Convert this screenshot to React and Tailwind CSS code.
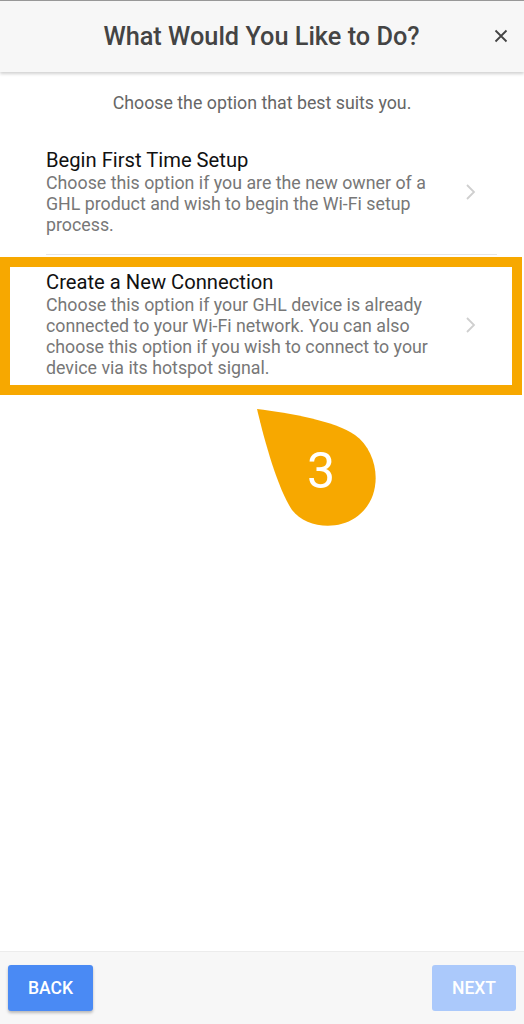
import React from "react";

function Chevron() {
  return (
    <svg width="12" height="18" viewBox="0 0 12 18" className="shrink-0">
      <path d="M2 2 L9 9 L2 16" fill="none" stroke="#cfcfcf" strokeWidth="1.8" />
    </svg>
  );
}

export default function App() {
  return (
    <div className="h-[1024px] w-[524px] flex flex-col bg-white overflow-hidden" style={{ fontFamily: "Roboto, 'Noto Sans', sans-serif" }}>
      <div className="border-t border-[#9a9a9a]" />
      <header className="relative h-[71px] bg-[#f7f7f7] flex items-center justify-center shadow-[0_2px_3px_rgba(0,0,0,0.18)] z-10">
        <h1 className="text-[25.3px] font-medium text-[#444] pr-[1px]">What Would You Like to Do?</h1>
        <button className="absolute right-[16px] top-[28px]">
          <svg width="14" height="14" viewBox="0 0 14 14">
            <path d="M1.5 1.5 L12.5 12.5 M12.5 1.5 L1.5 12.5" stroke="#444" strokeWidth="1.8" />
          </svg>
        </button>
      </header>
      <main className="flex-1 flex flex-col">
        <p className="pt-[21px] text-center text-[17.8px] leading-[20px] text-[#666]">Choose the option that best suits you.</p>
        <div className="mt-[36px] ml-[46px] mr-[27px] flex items-center border-b border-[#e6e6e6] pb-[19px]">
          <div className="flex-1">
            <div className="text-[20.2px] leading-[23px] text-[#111]">Begin First Time Setup</div>
            <div className="text-[17.8px] leading-[21px] text-[#777] pr-[20px]">Choose this option if you are the new owner of a GHL product and wish to begin the Wi-Fi setup process.</div>
          </div>
          <div className="pr-[20px]"><Chevron /></div>
        </div>
        <div className="mt-[2px] mr-[2px] border-[10px] border-[#F7A800] flex items-center pl-[36px] pt-[4px] pb-[7px]">
          <div className="flex-1">
            <div className="text-[20.2px] leading-[23px] text-[#111]">Create a New Connection</div>
            <div className="text-[17.8px] leading-[21px] text-[#777]">Choose this option if your GHL device is already connected to your Wi-Fi network. You can also choose this option if you wish to connect to your device via its hotspot signal.</div>
          </div>
          <div className="pr-[35px] pl-[10px]"><Chevron /></div>
        </div>
        <div className="relative ml-[250px] mt-[8px] w-[132px] h-[126px]">
          <svg width="132" height="126" viewBox="0 0 132 126" className="absolute inset-0">
            <path d="M7 6 C40 10 85 18 105 32 C130 50 135 95 105 115 C85 128 55 124 42 107 C28 86 15 40 7 6 Z" fill="#F7A800" />
          </svg>
          <span className="absolute left-[71px] top-[68px] -translate-x-1/2 -translate-y-1/2 text-white text-[50px] leading-none font-normal">3</span>
        </div>
      </main>
      <footer className="h-[73px] bg-[#f7f7f7] border-t border-[#ececec] flex items-center justify-between px-[8px]">
        <button className="w-[85px] h-[46px] rounded-[3px] bg-[#4a8af4] text-white text-[17.5px] font-medium shadow-[0_2px_3px_rgba(0,0,0,0.25)]">BACK</button>
        <button className="w-[84px] h-[46px] rounded-[3px] bg-[#abc9fb] text-white text-[17.5px] font-medium">NEXT</button>
      </footer>
    </div>
  );
}
